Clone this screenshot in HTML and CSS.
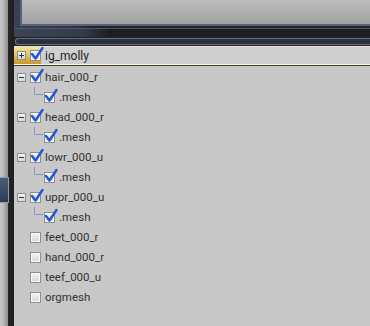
FILE: index.html
```html
<!DOCTYPE html>
<html lang="en">
<head>
    <meta charset="UTF-8">
    <title>Scene tree</title>
    <link rel="stylesheet" href="styles.css">
</head>
<body>
    <div class="side">
        <div class="side-win"></div>
    </div>
    <div class="main">
        <div class="view-frame">
            <div class="viewport"></div>
        </div>
        <div class="band"></div>
        <div class="hscroll"><div class="hscroll-track"></div></div>

        <div class="tree">
            <div class="row sel">
                <span class="exp plus"></span>
                <span class="cb on"><svg viewBox="0 0 14 14"><polyline points="2,7 5.5,11.5 12.5,1"/></svg></span>
                <span class="lbl">ig_molly</span>
            </div>
            <div class="row">
                <span class="exp minus"></span>
                <span class="cb on"><svg viewBox="0 0 14 14"><polyline points="2,7 5.5,11.5 12.5,1"/></svg></span>
                <span class="lbl">hair_000_r</span>
            </div>
            <div class="row child">
                <span class="branch"></span>
                <span class="cb on"><svg viewBox="0 0 14 14"><polyline points="2,7 5.5,11.5 12.5,1"/></svg></span>
                <span class="lbl">.mesh</span>
            </div>
            <div class="row">
                <span class="exp minus"></span>
                <span class="cb on"><svg viewBox="0 0 14 14"><polyline points="2,7 5.5,11.5 12.5,1"/></svg></span>
                <span class="lbl">head_000_r</span>
            </div>
            <div class="row child">
                <span class="branch"></span>
                <span class="cb on"><svg viewBox="0 0 14 14"><polyline points="2,7 5.5,11.5 12.5,1"/></svg></span>
                <span class="lbl">.mesh</span>
            </div>
            <div class="row">
                <span class="exp minus"></span>
                <span class="cb on"><svg viewBox="0 0 14 14"><polyline points="2,7 5.5,11.5 12.5,1"/></svg></span>
                <span class="lbl">lowr_000_u</span>
            </div>
            <div class="row child">
                <span class="branch"></span>
                <span class="cb on"><svg viewBox="0 0 14 14"><polyline points="2,7 5.5,11.5 12.5,1"/></svg></span>
                <span class="lbl">.mesh</span>
            </div>
            <div class="row">
                <span class="exp minus"></span>
                <span class="cb on"><svg viewBox="0 0 14 14"><polyline points="2,7 5.5,11.5 12.5,1"/></svg></span>
                <span class="lbl">uppr_000_u</span>
            </div>
            <div class="row child">
                <span class="branch"></span>
                <span class="cb on"><svg viewBox="0 0 14 14"><polyline points="2,7 5.5,11.5 12.5,1"/></svg></span>
                <span class="lbl">.mesh</span>
            </div>
            <div class="row">
                <span class="exp none"></span>
                <span class="cb"></span>
                <span class="lbl">feet_000_r</span>
            </div>
            <div class="row">
                <span class="exp none"></span>
                <span class="cb"></span>
                <span class="lbl">hand_000_r</span>
            </div>
            <div class="row">
                <span class="exp none"></span>
                <span class="cb"></span>
                <span class="lbl">teef_000_u</span>
            </div>
            <div class="row">
                <span class="exp none"></span>
                <span class="cb"></span>
                <span class="lbl">orgmesh</span>
            </div>
        </div>
    </div>
</body>
</html>
```

FILE: styles.css
```css
html, body {
    height: 100%;
}
body {
    margin: 0;
    display: flex;
    background-color: #c8c8c8;
    font-family: Roboto, Arial, sans-serif;
    overflow: hidden;
}
.side {
    width: 14px;
    flex-shrink: 0;
    display: flex;
    flex-direction: column;
    justify-content: flex-start;
    background: linear-gradient(to right, #c4c4c4 0, #bdbdbd 3px, #a6a6a6 5px, #8e8e8e 8px, #262626 8px, #1f1f1f 14px);
}
.side-win {
    margin-top: 177px;
    height: 26px;
    width: 9px;
    box-sizing: border-box;
    border: 1px solid #8f9aa8;
    border-left: none;
    background: linear-gradient(#4a5e7c, #2c3a52);
}
.main {
    flex: 1;
    display: flex;
    flex-direction: column;
    min-width: 0;
}
.view-frame {
    height: 28px;
    padding-left: 6px;
    background: linear-gradient(to right, #3a4252, #2e3340 60px, #232323 80px);
    display: flex;
}
.viewport {
    flex: 1;
    box-sizing: border-box;
    height: 26px;
    border-left: 2px solid #56627c;
    border-bottom: 2px solid #56627c;
    background: linear-gradient(#bcbcbc, #a2a2a2);
}
.band {
    height: 8px;
    background: linear-gradient(to right, #3c4455, #353b48 70px, #1e1e1e 95px);
    border-top: 1px solid #4a5674;
}
.hscroll {
    height: 8px;
    padding: 1px 0 0 1px;
    background: #202225;
}
.hscroll-track {
    height: 5px;
    border: 1px solid #5f6f8e;
    border-right: none;
    border-radius: 3px 0 0 3px;
    background: #2c303a;
}
.tree {
    flex: 1;
    border-top: 1px solid #ece6cc;
    background: #c8c8c8;
}
.row {
    height: 20px;
    display: flex;
    align-items: center;
    padding-left: 3px;
    font-size: 11.5px;
    color: #333333;
}
.row.sel {
    height: 17px;
    border-bottom: 1px solid #f4f4f0;
    box-shadow: 0 1px 0 #4a3c18;
    margin-bottom: 2px;
    background: linear-gradient(to right, transparent 0, transparent 27px, #cfcfcf 27px);
    position: relative;
}
.row.sel::before {
    content: "";
    position: absolute;
    left: 0;
    top: 0;
    width: 27px;
    height: 17px;
    background: linear-gradient(#f3e3a2, #e0c15c 50%, #c99a2a);
}
.row.child {
    padding-left: 20px;
}
.exp {
    width: 9px;
    height: 9px;
    box-sizing: border-box;
    margin-right: 4px;
    position: relative;
    flex-shrink: 0;
}
.exp.plus, .exp.minus {
    border: 1px solid #8c8c8c;
    background: linear-gradient(#f6f6f6, #d6d6d6);
}
.exp.plus::before, .exp.minus::before {
    content: "";
    position: absolute;
    left: 1px;
    top: 3px;
    width: 5px;
    height: 1px;
    background: #333;
}
.exp.plus::after {
    content: "";
    position: absolute;
    left: 3px;
    top: 1px;
    width: 1px;
    height: 5px;
    background: #333;
}
.branch {
    align-self: flex-start;
    width: 8px;
    height: 7px;
    margin-right: 1px;
    border-left: 1px solid #7e9ac8;
    border-bottom: 1px solid #7e9ac8;
    flex-shrink: 0;
}
.cb {
    width: 11px;
    height: 11px;
    box-sizing: border-box;
    margin-right: 4px;
    border: 1px solid #8e8e8e;
    background: linear-gradient(#f2f2f2, #d8d8d8);
    box-shadow: inset 0 0 0 1px #fafafa;
    position: relative;
    flex-shrink: 0;
}
.cb svg {
    position: absolute;
    left: -1px;
    top: -4px;
    width: 14px;
    height: 14px;
    overflow: visible;
}
.cb svg polyline {
    fill: none;
    stroke: #1f55d6;
    stroke-width: 2.4;
    stroke-linecap: round;
    stroke-linejoin: round;
}
.lbl {
    white-space: nowrap;
}
.row.sel .lbl {
    font-size: 12px;
    color: #1e1e1e;
}
```
